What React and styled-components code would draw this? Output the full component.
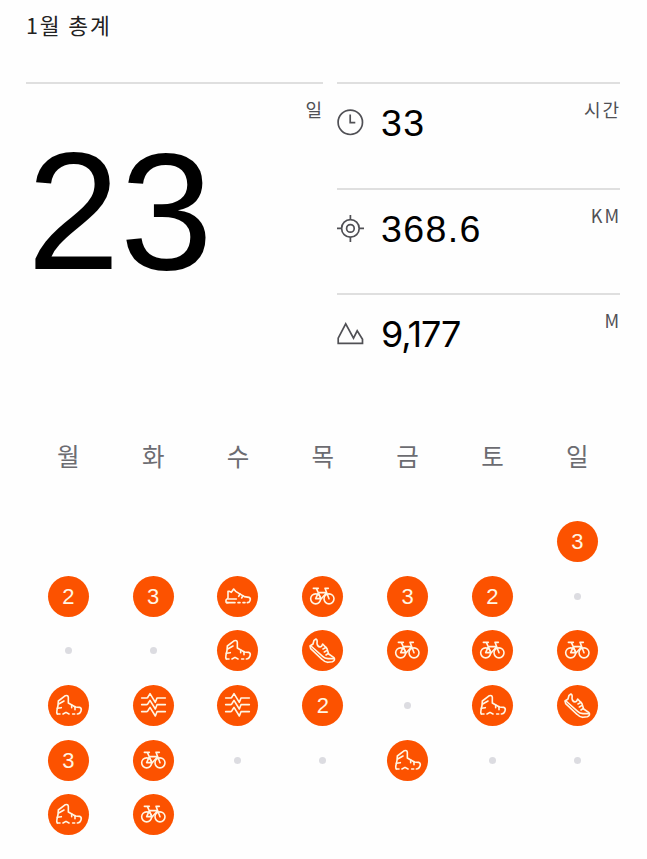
import React from "react";
import styled, { createGlobalStyle } from "styled-components";

const GlobalStyle = createGlobalStyle`
  body { margin: 0; background: #fff; }
  * { box-sizing: border-box; }
`;

const Page = styled.main`
  width: 647px;
  height: 859px;
  padding: 0 27px 0 26px;
  overflow: hidden;
  background: #fefefe;
  color: #000;
  font-family: "Liberation Sans", "Noto Sans CJK KR", sans-serif;
`;

const Title = styled.h1`
  margin: 0;
  height: 82px;
  padding-top: 10px;
  font-family: "Noto Sans CJK KR", sans-serif;
  font-size: 21.5px;
  line-height: 30px;
  font-weight: 400;
  letter-spacing: 1.9px;
  color: #222;
`;

const Summary = styled.section`
  display: grid;
  grid-template-columns: 297px 283px;
  column-gap: 14px;
  height: 317px;
`;

const Days = styled.div`
  border-top: 2px solid #dfdfdf;
  display: flex;
  justify-content: space-between;
`;

const DayCount = styled.div`
  margin: 44px 0 0 1px;
  font-size: 167px;
  line-height: 166px;
`;

const Unit = styled.span`
  margin: 0 -1px 0 auto;
  padding-top: 13px;
  font-family: "Noto Sans CJK KR", sans-serif;
  font-size: 18px;
  line-height: 24px;
  letter-spacing: 2px;
  color: #505055;
`;

const Stats = styled.div`
  display: grid;
  grid-template-rows: repeat(3, 105.5px);
`;

const Stat = styled.div`
  border-top: 2px solid #dfdfdf;
  display: flex;
`;

const StatIcon = styled.svg`
  width: 27px;
  height: 27px;
  margin-top: 25px;
  fill: none;
  stroke: #505055;
  stroke-width: 1.7;
`;

const Value = styled.span`
  margin: 17px 0 0 17px;
  font-size: 37.5px;
  line-height: 44px;
  letter-spacing: 1.4px;
`;

const TightValue = styled(Value)`
  font-family: Inter, sans-serif;
  font-size: 36px;
  letter-spacing: -1.1px;
`;

const Week = styled.div`
  display: grid;
  grid-template-columns: repeat(7, 84.83px);
  margin-left: -0.1px;
`;

const WeekNames = styled(Week)`
  height: 122.3px;
  padding-top: 39px;
`;

const WeekName = styled.span`
  text-align: center;
  font-family: "Noto Sans CJK KR", sans-serif;
  font-size: 24.5px;
  line-height: 36px;
  color: #6c6c71;
`;

const Calendar = styled(Week)`
  grid-auto-rows: 54.6px;
`;

const Cell = styled.div`
  display: flex;
  justify-content: center;
`;

const Badge = styled.div`
  display: flex;
  align-items: center;
  justify-content: center;
  width: 41px;
  height: 41px;
  border-radius: 50%;
  background: #fc5200;
  color: #fff6e4;
  font-size: 22px;
  line-height: 41px;
`;

const Dot = styled.div`
  width: 7px;
  height: 7px;
  margin-top: 17px;
  border-radius: 50%;
  background: #dcdce1;
`;

const Glyph = styled.svg`
  width: 41px;
  height: 41px;
  fill: none;
  stroke: #fff6e4;
  stroke-width: 4.8;
  stroke-linejoin: round;
  stroke-linecap: round;
`;

const glyphs = {
  shoe: (
    <>
      <path d="M33 80 H29 Q27 80 27 77 V72 L33 66 V46 H38 L43 49 L50 39 L56 46 L82 62 L96 64 Q102 67 99 74 Q97 80 91 80" />
      <path d="M33 69 H58 M29 80 H54 M63 80 H69 M78 80 H84 M69 54 L65 61 M78 59 L74 66" />
    </>
  ),
  bike: (
    <>
      <circle cx="41" cy="68.5" r="15" />
      <circle cx="81" cy="68.5" r="15" />
      <path d="M41 68 L49 50 H74 L57 69 L43 37 M41 68 H57 M81 68 L69 37 H79 M34 37 H49" />
    </>
  ),
  boot: (
    <>
      <path d="M28 87 Q25 84 27 75 Q31 62 31 48 L52 32 Q60 30 61 37 V54 L82 66 L95 67 Q102 70 99 78 Q96 87 88 87" />
      <path d="M32 57 L48 48 M28 70 L40 68 M28 87 H36 M45 87 L54 82 L63 87 M74 87 H80 M71 60 V68 M81 65 V74" />
    </>
  ),
  run: (
    <>
      <path d="M42 27 L36 31 L33 42 L24 48 L26 56 L60 88 Q68 97 78 97 L91 95 Q101 91 96 83 L80 72 L75 56 L62 42 Q60 50 54 51 Q46 50 45 40 Q47 29 42 27 Z" />
      <path d="M27 48 L62 79 Q68 85 78 86 H95 M72 52 L63 57 M75 61 L67 66 M79 70 L72 75" />
    </>
  ),
  waves: (
    <>
      <path d="M26 39 H41 Q44 39 46 34 L51 26 L67 52 L72 39 H97" />
      <path d="M26 59 H41 Q44 59 46 54 L51 46 L67 72 L72 59 H97" />
      <path d="M26 80 H41 Q44 80 46 75 L51 67 L67 93 L72 80 H97" />
    </>
  ),
};

const S = "shoe", B = "bike", H = "boot", R = "run", W = "waves", D = "dot";
const days = [
  null, null, null, null, null, null, "3",
  "2", "3", S, B, "3", "2", D,
  D, D, H, R, B, B, B,
  H, W, W, "2", D, H, R,
  "3", B, D, D, H, D, D,
  H, B, null, null, null, null, null,
];

function Day({ kind }) {
  if (!kind) return <Cell />;
  if (kind === D) return <Cell><Dot /></Cell>;
  return (
    <Cell>
      <Badge>
        {glyphs[kind] ? <Glyph viewBox="0 0 123 123">{glyphs[kind]}</Glyph> : kind}
      </Badge>
    </Cell>
  );
}

export default function App() {
  return (
    <Page>
      <GlobalStyle />
      <Title>1월 총계</Title>
      <Summary>
        <Days>
          <DayCount>23</DayCount>
          <Unit>일</Unit>
        </Days>
        <Stats>
          <Stat>
            <StatIcon viewBox="0 0 27 27">
              <circle cx="13.3" cy="13.3" r="12.2" />
              <path d="M13.2 5.5V13.6H18.3" />
            </StatIcon>
            <Value>33</Value>
            <Unit>시간</Unit>
          </Stat>
          <Stat>
            <StatIcon viewBox="0 0 27 27">
              <circle cx="13.4" cy="13.4" r="8.8" />
              <circle cx="13.4" cy="13.4" r="3.8" />
              <path d="M13.4 0V4.6M13.4 22.2V27M0 13.4H4.6M22.2 13.4H27" />
            </StatIcon>
            <Value>368.6</Value>
            <Unit>KM</Unit>
          </Stat>
          <Stat>
            <StatIcon viewBox="0 0 27 27">
              <path d="M1.2 23.3V18.2L8.7 3.8L16.5 18.2L20.2 10.8L25.5 19.2V23.3Z" />
            </StatIcon>
            <TightValue>9,177</TightValue>
            <Unit>M</Unit>
          </Stat>
        </Stats>
      </Summary>
      <WeekNames>
        {["월", "화", "수", "목", "금", "토", "일"].map((name) => (
          <WeekName key={name}>{name}</WeekName>
        ))}
      </WeekNames>
      <Calendar>
        {days.map((kind, i) => <Day key={i} kind={kind} />)}
      </Calendar>
    </Page>
  );
}
